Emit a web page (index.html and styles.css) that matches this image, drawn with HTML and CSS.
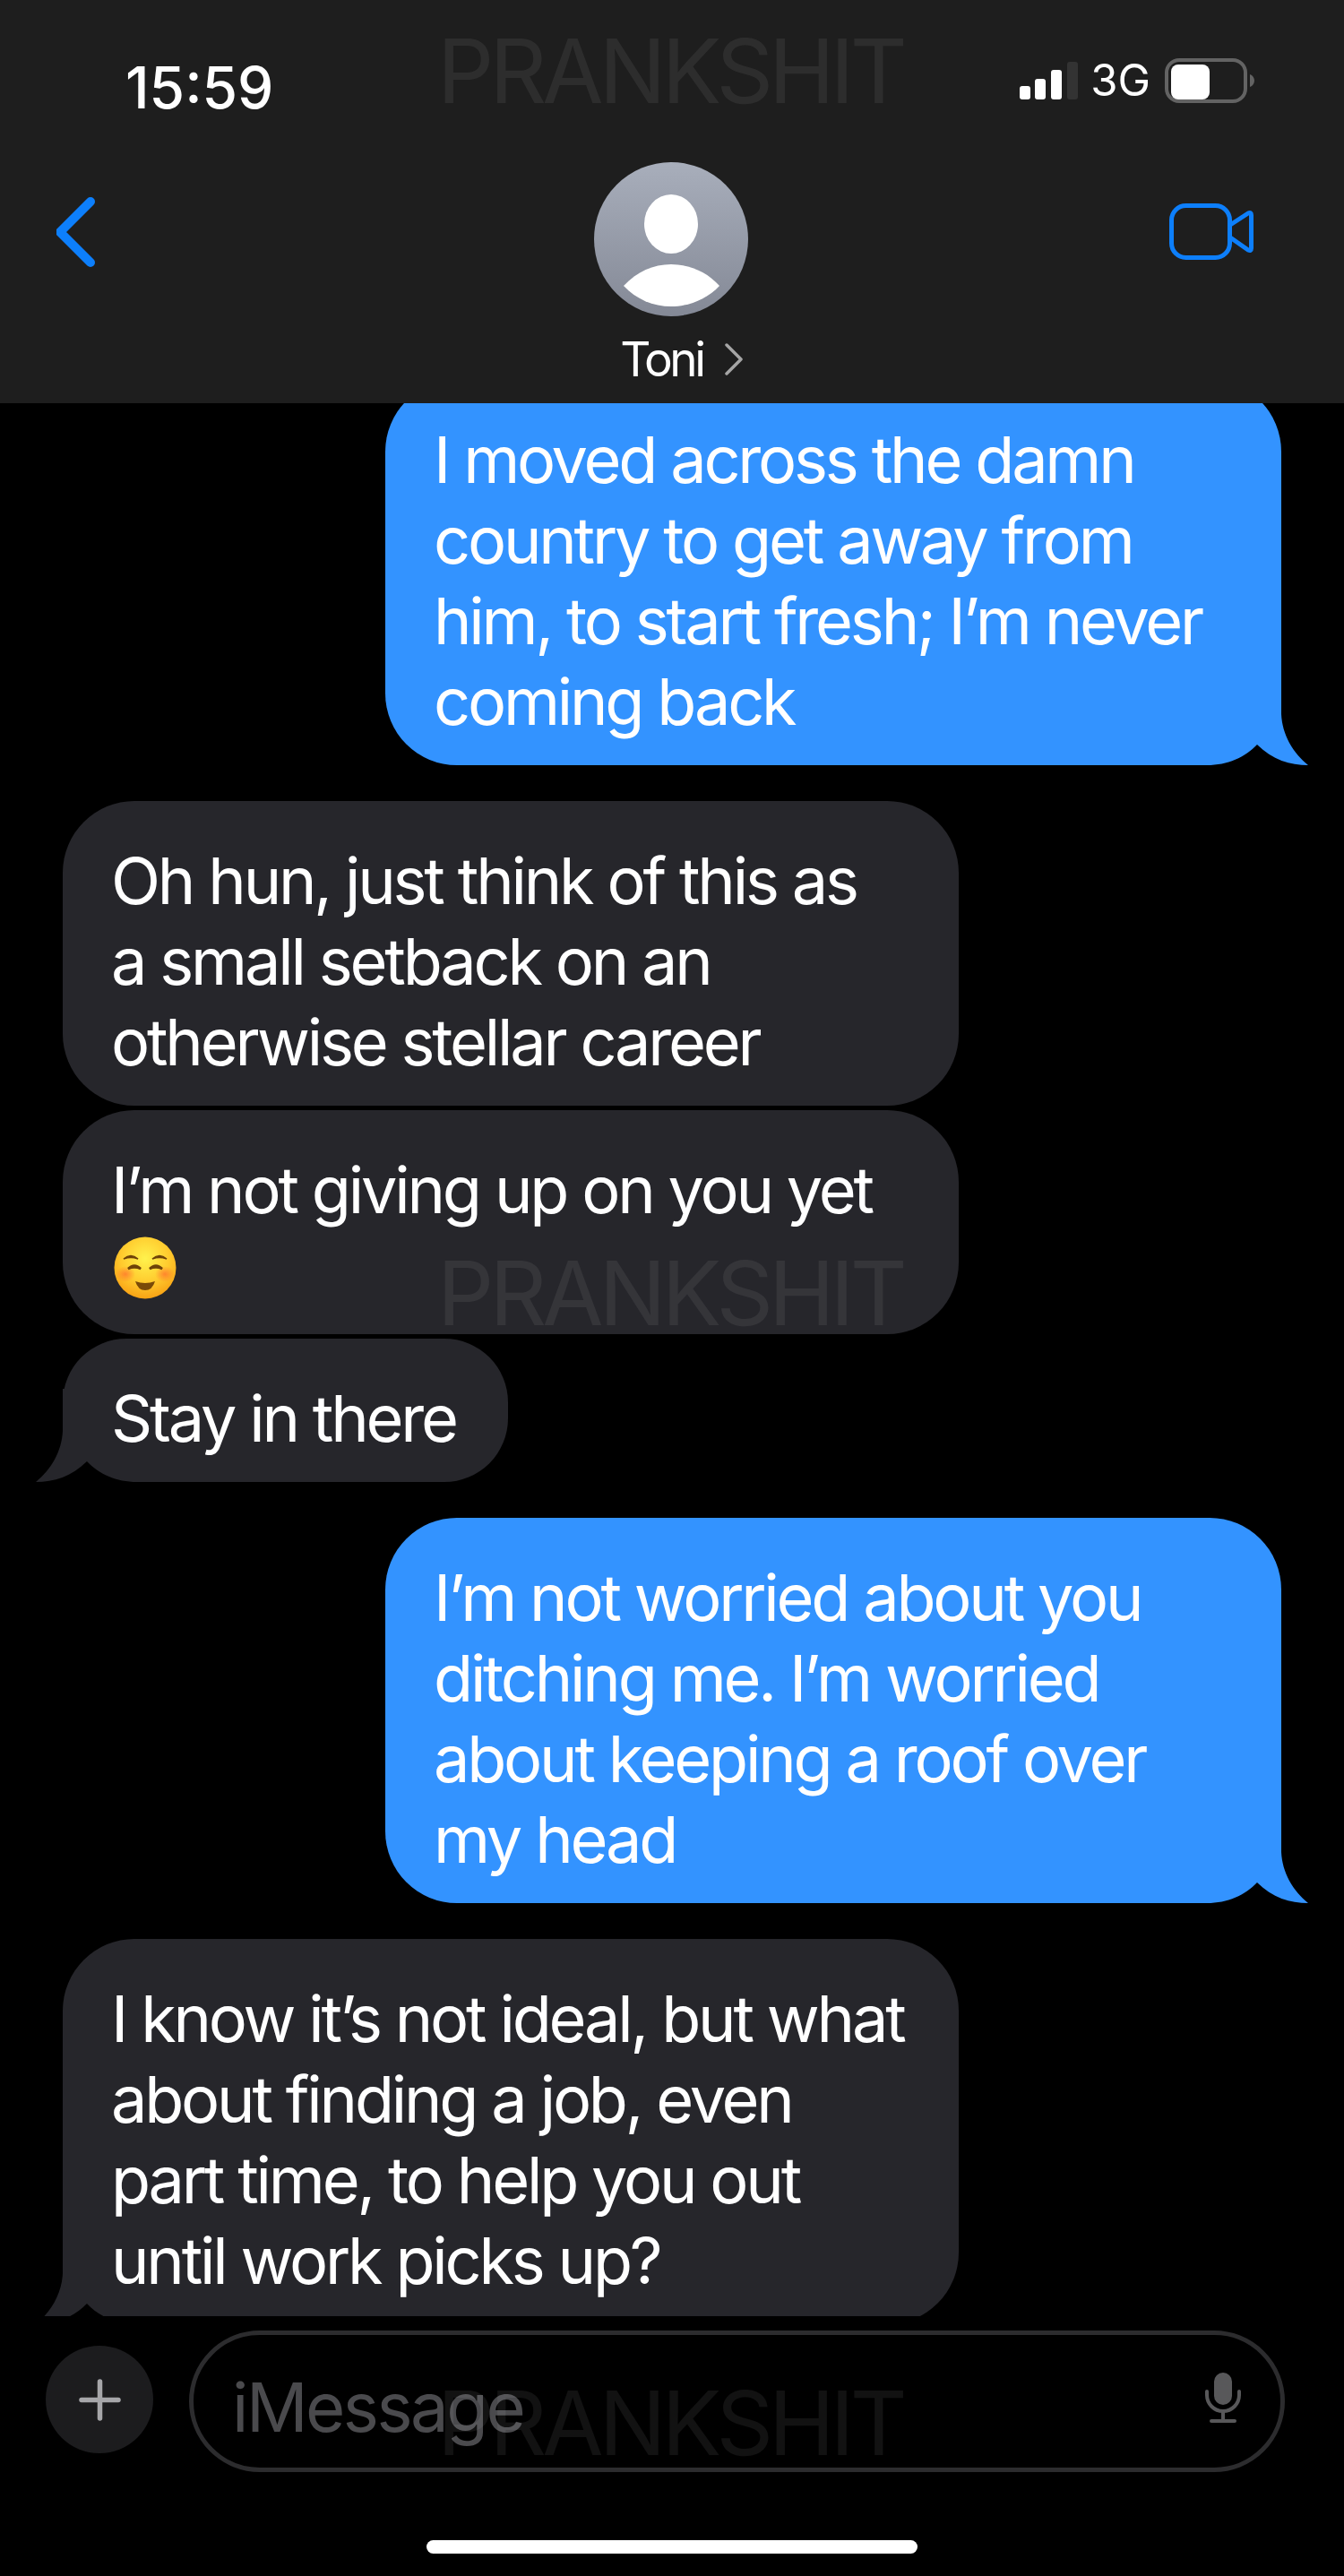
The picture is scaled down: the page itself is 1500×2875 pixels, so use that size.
FILE: index.html
```html
<!DOCTYPE html>
<html lang="en">
<head>
<meta charset="utf-8">
<title>Toni</title>
<link rel="stylesheet" href="styles.css">
</head>
<body>
<div class="phone">
  <header class="header">
    <div class="status">
      <span class="time">15:59</span>
      <div class="status-right">
        <svg class="signal" width="65" height="42" viewBox="0 0 65 42">
          <rect x="0" y="27" width="12" height="15" rx="3" fill="#fff"/>
          <rect x="17" y="19" width="12" height="23" rx="3" fill="#fff"/>
          <rect x="35" y="9" width="12" height="33" rx="3" fill="#fff"/>
          <rect x="53" y="0" width="12" height="42" rx="3" fill="#333"/>
        </svg>
        <span class="network">3G</span>
        <svg class="battery" width="100" height="50" viewBox="0 0 100 50">
          <rect x="2" y="2" width="88" height="46" rx="14" fill="none" stroke="#636363" stroke-width="4"/>
          <rect x="7" y="7" width="43" height="39" rx="8" fill="#fff"/>
          <path d="M95 18c3 1 5 4 5 7s-2 6-5 7z" fill="#636363"/>
        </svg>
      </div>
    </div>
    <nav class="nav">
      <svg class="back" width="60" height="90" viewBox="0 0 60 90">
        <path d="M38 11 L4 45 L38 79" fill="none" stroke="#0d7ffb" stroke-width="10" stroke-linecap="round" stroke-linejoin="round"/>
      </svg>
      <div class="contact">
        <svg class="avatar" width="172" height="172" viewBox="0 0 172 172">
          <defs>
            <linearGradient id="avatarFill" x1="0" y1="0" x2="0" y2="1">
              <stop offset="0" stop-color="#a8aebb"/>
              <stop offset="1" stop-color="#848996"/>
            </linearGradient>
          </defs>
          <circle cx="86" cy="86" r="86" fill="url(#avatarFill)"/>
          <ellipse cx="86" cy="69" rx="30" ry="33" fill="#fff"/>
          <path d="M33 138 C48 122 66 114 86 114 C106 114 126 122 140 138 C126 153 106 161 86 161 C66 161 47 153 33 138 Z" fill="#fff"/>
        </svg>
        <div class="name-row">
          <span class="name">Toni</span>
          <svg class="name-chevron" width="20" height="36" viewBox="0 0 20 36">
            <path d="M2 2 L18 18 L2 34" fill="none" stroke="#a5a5a5" stroke-width="3.5" stroke-linecap="round" stroke-linejoin="round"/>
          </svg>
        </div>
      </div>
      <svg class="video" width="94" height="63" viewBox="0 0 94 63">
        <rect x="2.5" y="2.5" width="65" height="58" rx="16" fill="none" stroke="#0d7ffb" stroke-width="5"/>
        <path d="M68 24 L88 11 Q91.5 9.5 91.5 13 L91.5 50 Q91.5 53.5 88 52 L68 38" fill="none" stroke="#0d7ffb" stroke-width="5" stroke-linejoin="round" stroke-linecap="round"/>
      </svg>
    </nav>
  </header>

  <main class="messages">
    <div class="group first">
      <div class="bubble sent wide">I moved across the damn<br>country to get away from<br>him, to start fresh; I’m never<br>coming back
        <svg class="tail tail-sent" width="130" height="104" viewBox="0 0 130 104"><path d="M0 0 H100 V47 C101 70 113 90 130 104 C110 104 90 98 73 81 C60 95 40 104 17 104 H0 Z"/></svg>
      </div>
    </div>
    <div class="group">
      <div class="bubble received wide">Oh hun, just think of this as<br>a small setback on an<br>otherwise stellar career</div>
      <div class="bubble received wide">I’m not giving up on you yet
        <svg class="emoji" width="70" height="70" viewBox="0 0 70 70">
          <defs>
            <radialGradient id="face" cx="0.5" cy="0.35" r="0.7">
              <stop offset="0" stop-color="#fff24d"/>
              <stop offset="0.55" stop-color="#ffcb2e"/>
              <stop offset="1" stop-color="#f79a10"/>
            </radialGradient>
            <radialGradient id="blush">
              <stop offset="0" stop-color="#ff6a2e" stop-opacity="0.7"/>
              <stop offset="1" stop-color="#ff6a2e" stop-opacity="0"/>
            </radialGradient>
          </defs>
          <circle cx="35" cy="35" r="34.5" fill="url(#face)"/>
          <ellipse cx="13" cy="42" rx="11" ry="9" fill="url(#blush)"/>
          <ellipse cx="57" cy="42" rx="11" ry="9" fill="url(#blush)"/>
          <path d="M11 25 Q19 18 27 25 Q19 22 11 25 Z M43 25 Q51 18 59 25 Q51 22 43 25 Z" fill="#6e4208" stroke="#6e4208" stroke-width="1.5"/>
          <path d="M16 36 Q23 29 30 36 Q23 33 16 36 Z M40 36 Q47 29 54 36 Q47 33 40 36 Z" fill="#6e4208" stroke="#6e4208" stroke-width="2.5"/>
          <path d="M24 50 Q35 54 46 50 Q43 60 35 60 Q27 60 24 50 Z" fill="#7a4a08"/>
        </svg>
      </div>
      <div class="bubble received">Stay in there
        <svg class="tail tail-received" width="130" height="104" viewBox="0 0 130 104"><path d="M0 0 H100 V47 C101 70 113 90 130 104 C110 104 90 98 73 81 C60 95 40 104 17 104 H0 Z"/></svg>
      </div>
    </div>
    <div class="group">
      <div class="bubble sent wide">I’m not worried about you<br>ditching me. I’m worried<br>about keeping a roof over<br>my head
        <svg class="tail tail-sent" width="130" height="104" viewBox="0 0 130 104"><path d="M0 0 H100 V47 C101 70 113 90 130 104 C110 104 90 98 73 81 C60 95 40 104 17 104 H0 Z"/></svg>
      </div>
    </div>
    <div class="group">
      <div class="bubble received wide">I know it’s not ideal, but what<br>about finding a job, even<br>part time, to help you out<br>until work picks up?
        <svg class="tail tail-received" width="130" height="104" viewBox="0 0 130 104"><path d="M0 0 H100 V47 C101 70 113 90 130 104 C110 104 90 98 73 81 C60 95 40 104 17 104 H0 Z"/></svg>
      </div>
    </div>
  </main>

  <footer class="composer">
    <div class="plus">
      <svg width="47" height="47" viewBox="0 0 47 47">
        <path d="M23.5 3 V44 M3 23.5 H44" stroke="#a6a6a9" stroke-width="5.5" stroke-linecap="round"/>
      </svg>
    </div>
    <div class="field">
      <span class="placeholder">iMessage</span>
      <svg class="mic" width="40" height="57" viewBox="0 0 40 57">
        <rect x="10" y="0" width="20" height="36" rx="10" fill="#58585a"/>
        <path d="M2 21 V25 C2 35 10 43 20 43 C30 43 38 35 38 25 V21" fill="none" stroke="#58585a" stroke-width="4" stroke-linecap="round"/>
        <path d="M20 43 V54 M7 54 H33" fill="none" stroke="#58585a" stroke-width="4" stroke-linecap="round"/>
      </svg>
    </div>
  </footer>
  <div class="home-row"><div class="home-bar"></div></div>

  <div class="watermark wm-top">PRANKSHIT</div>
  <div class="watermark wm-mid">PRANKSHIT</div>
  <div class="watermark wm-bottom">PRANKSHIT</div>
</div>
</body>
</html>
```

FILE: styles.css
```css
* { box-sizing: border-box; }
html, body { margin: 0; padding: 0; background: #000; }
body { font-family: Inter, "Liberation Sans", sans-serif; color: #fff; }

.phone {
  position: relative;
  width: 1500px;
  height: 2875px;
  overflow: hidden;
  background: #000;
}

/* Header */
.header {
  height: 450px;
  background: #1e1e1e;
  display: flex;
  flex-direction: column;
}
.status {
  height: 181px;
  display: flex;
  justify-content: space-between;
  align-items: flex-start;
  padding: 61px 100px 0 140px;
}
.time {
  font-size: 64px;
  line-height: 74px;
  font-weight: 500;
}
.status-right {
  display: flex;
  align-items: center;
  margin-top: 4px;
}
.network {
  font-size: 49px;
  line-height: 50px;
  margin-left: 14px;
}
.battery { margin-left: 16px; }

.nav {
  display: grid;
  grid-template-columns: 1fr auto 1fr;
  align-items: start;
  padding: 0 101px;
}
.back { margin: 33px 0 0 -38px; }
.video { justify-self: end; margin-top: 46px; }
.contact {
  display: flex;
  flex-direction: column;
  align-items: center;
  margin-right: 2px;
}
.avatar { display: block; }
.name-row {
  display: flex;
  align-items: center;
  gap: 24px;
  margin-top: 16px;
  margin-left: 23px;
}
.name {
  font-size: 53px;
  line-height: 64px;
  letter-spacing: -3.4px;
}

/* Messages */
.messages {
  height: 2135px;
  overflow: hidden;
  display: flex;
  flex-direction: column;
  gap: 40px;
  padding: 0 70px;
}
.group {
  display: flex;
  flex-direction: column;
  gap: 5px;
  flex: none;
}
.group.first { margin-top: -26px; }
.bubble {
  position: relative;
  isolation: isolate;
  width: fit-content;
  padding: 44px 58px 26px 54px;
  border-radius: 80px;
  font-size: 72px;
  line-height: 90px;
  letter-spacing: -3.2px;
  white-space: nowrap;
}
.bubble.wide { width: 1000px; }
.sent {
  align-self: flex-end;
  background: #3393ff;
  border-bottom-right-radius: 100px;
}
.received {
  align-self: flex-start;
  background: #26262b;
}
.received:has(.tail) { border-bottom-left-radius: 100px; }
.tail {
  position: absolute;
  bottom: 0;
  display: block;
  z-index: -1;
}
.tail-sent { right: -30px; fill: #3393ff; }
.tail-received { left: -30px; fill: #26262b; transform: scaleX(-1); }
.emoji {
  display: block;
  margin: 7px 0 13px 3px;
}

/* Composer */
.composer {
  display: flex;
  align-items: center;
  gap: 40px;
  padding: 16px 66px 0 51px;
}
.plus {
  width: 120px;
  height: 120px;
  flex: none;
  border-radius: 50%;
  background: #1c1c1e;
  display: flex;
  align-items: center;
  justify-content: center;
  margin-top: -4px;
}
.plus svg { display: block; }
.field {
  flex: 1;
  height: 158px;
  border: 5px solid #2c2c2e;
  border-radius: 79px;
  display: flex;
  align-items: center;
  justify-content: space-between;
  padding: 0 44px 0 43px;
}
.placeholder {
  font-size: 76px;
  line-height: 90px;
  letter-spacing: -2.5px;
  color: #4a4a4d;
  margin-top: 11px;
}
.mic { display: block; margin-top: -8px; }

.home-row {
  display: flex;
  justify-content: center;
  margin-top: 76px;
}
.home-bar {
  width: 548px;
  height: 15px;
  border-radius: 8px;
  background: #fff;
}

/* Watermark */
.watermark {
  position: absolute;
  left: 488px;
  font-size: 99px;
  line-height: 120px;
  letter-spacing: -4.8px;
  color: rgba(255, 255, 255, 0.07);
  white-space: nowrap;
  pointer-events: none;
}
.wm-top { top: 19px; }
.wm-mid { top: 1383px; }
.wm-bottom { top: 2644px; }
```
